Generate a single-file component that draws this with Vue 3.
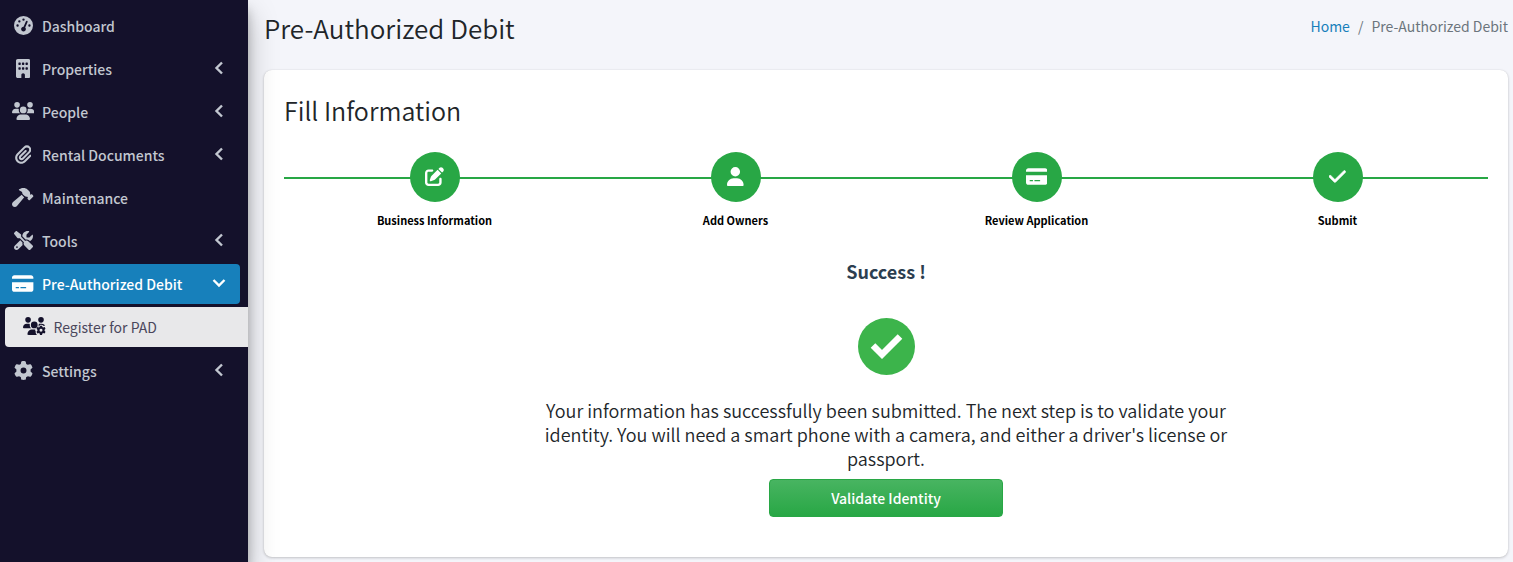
<script setup>
import { ref } from 'vue'

const icons = {
  gauge: { w: 512, d: 'M0 256a256 256 0 1 1 512 0A256 256 0 1 1 0 256zM288 96a32 32 0 1 0 -64 0 32 32 0 1 0 64 0zM256 416c35.3 0 64-28.7 64-64c0-17.4-6.9-33.1-18.1-44.6L366 161.7c5.3-12.1-.2-26.3-12.3-31.6s-26.3 .2-31.6 12.3L257.9 288c-.6 0-1.3 0-1.9 0c-35.3 0-64 28.7-64 64s28.7 64 64 64zM176 144a32 32 0 1 0 -64 0 32 32 0 1 0 64 0zM96 288a32 32 0 1 0 0-64 32 32 0 1 0 0 64zm352-32a32 32 0 1 0 -64 0 32 32 0 1 0 64 0z' },
  building: { w: 384, d: 'M48 0C21.5 0 0 21.5 0 48V464c0 26.5 21.5 48 48 48h96V432c0-26.5 21.5-48 48-48s48 21.5 48 48v80h96c26.5 0 48-21.5 48-48V48c0-26.5-21.5-48-48-48H48zM64 240c0-8.8 7.2-16 16-16h32c8.8 0 16 7.2 16 16v32c0 8.8-7.2 16-16 16H80c-8.8 0-16-7.2-16-16V240zm112-16h32c8.8 0 16 7.2 16 16v32c0 8.8-7.2 16-16 16H176c-8.8 0-16-7.2-16-16V240c0-8.8 7.2-16 16-16zm80 16c0-8.8 7.2-16 16-16h32c8.8 0 16 7.2 16 16v32c0 8.8-7.2 16-16 16H272c-8.8 0-16-7.2-16-16V240zM80 96h32c8.8 0 16 7.2 16 16v32c0 8.8-7.2 16-16 16H80c-8.8 0-16-7.2-16-16V112c0-8.8 7.2-16 16-16zm80 16c0-8.8 7.2-16 16-16h32c8.8 0 16 7.2 16 16v32c0 8.8-7.2 16-16 16H176c-8.8 0-16-7.2-16-16V112zM272 96h32c8.8 0 16 7.2 16 16v32c0 8.8-7.2 16-16 16H272c-8.8 0-16-7.2-16-16V112c0-8.8 7.2-16 16-16z' },
  users: { w: 640, d: 'M144 0a80 80 0 1 1 0 160A80 80 0 1 1 144 0zM512 0a80 80 0 1 1 0 160A80 80 0 1 1 512 0zM0 298.7C0 239.8 47.8 192 106.7 192h42.7c15.9 0 31 3.5 44.6 9.7c-1.3 7.2-1.9 14.7-1.9 22.3c0 38.2 16.8 72.5 43.3 96c-.2 0-.4 0-.7 0H21.3C9.6 320 0 310.4 0 298.7zM405.3 320c-.2 0-.4 0-.7 0c26.6-23.5 43.3-57.8 43.3-96c0-7.6-.7-15-1.9-22.3c13.6-6.3 28.7-9.7 44.6-9.7h42.7C592.2 192 640 239.8 640 298.7c0 11.8-9.6 21.3-21.3 21.3H405.3zM224 224a96 96 0 1 1 192 0 96 96 0 1 1 -192 0zM128 485.3C128 411.7 187.7 352 261.3 352H378.7C452.3 352 512 411.7 512 485.3c0 14.7-11.9 26.7-26.7 26.7H154.7c-14.7 0-26.7-11.9-26.7-26.7z' },
  clip: { w: 448, d: 'M364.2 83.8c-24.4-24.4-64-24.4-88.4 0l-184 184c-42.1 42.1-42.1 110.3 0 152.4s110.3 42.1 152.4 0l152-152c10.9-10.9 28.7-10.9 39.6 0s10.9 28.7 0 39.6l-152 152c-64 64-167.6 64-231.6 0s-64-167.6 0-231.6l184-184c46.3-46.3 121.3-46.3 167.6 0s46.3 121.3 0 167.6l-176 176c-28.6 28.6-75 28.6-103.6 0s-28.6-75 0-103.6l144-144c10.9-10.9 28.7-10.9 39.6 0s10.9 28.7 0 39.6l-144 144c-6.7 6.7-6.7 17.7 0 24.4s17.7 6.7 24.4 0l176-176c24.4-24.4 24.4-64 0-88.4z' },
  hammer: { w: 576, d: 'M413.5 237.5c-28.2 4.8-58.2-3.6-80-25.4l-38.1-38.1C280.4 159 272 138.8 272 117.6V105.5L192.3 62c-5.3-2.9-8.6-8.6-8.3-14.7s3.9-11.5 9.5-14l47.2-21C259.1 4.2 279 0 299.2 0h18.1c36.7 0 72 14 98.7 39.1l44.6 42c24.2 22.8 33.2 55.7 26.6 86L503 183l8-8c9.4-9.4 24.6-9.4 33.9 0l24 24c9.4 9.4 9.4 24.6 0 33.9l-88 88c-9.4 9.4-24.6 9.4-33.9 0l-24-24c-9.4-9.4-9.4-24.6 0-33.9l8-8-17.5-17.5zM27.4 377.1L260.9 182.6c3.5 4.9 7.5 9.6 11.8 14l38.1 38.1c6 6 12.4 11.2 19.2 15.7L134.9 484.6c-14.5 17.4-36 27.4-58.6 27.4C34.1 512 0 477.8 0 435.7c0-22.6 10.1-44.1 27.4-58.6z' },
  tools: { w: 512, d: 'M78.6 5C69.1-2.4 55.6-1.5 47 7L7 47c-8.5 8.5-9.4 22-2.1 31.6l80 104c4.5 5.9 11.6 9.4 19 9.4h54.1l109 109c-14.7 29-10 65.4 14.3 89.6l112 112c12.5 12.5 32.8 12.5 45.3 0l64-64c12.5-12.5 12.5-32.8 0-45.3l-112-112c-24.2-24.2-60.6-29-89.6-14.3l-109-109V104c0-7.5-3.5-14.5-9.4-19L78.6 5zM19.9 396.1C7.2 408.8 0 426.1 0 444.1C0 481.6 30.4 512 67.9 512c18 0 35.3-7.2 48-19.9L233.7 374.3c-7.8-20.9-9-43.6-3.6-65.1l-61.7-61.7L19.9 396.1zM512 144c0-10.5-1.1-20.7-3.2-30.5c-2.4-11.2-16.1-14.1-24.2-6l-63.9 63.9c-3 3-7.1 4.7-11.3 4.7H352c-8.8 0-16-7.2-16-16V102.6c0-4.2 1.7-8.3 4.7-11.3l63.9-63.9c8.1-8.1 5.2-21.8-6-24.2C388.7 1.1 378.5 0 368 0C288.5 0 224 64.5 224 144l0 .8 85.3 85.3c36-9.1 75.8 .5 104 28.7L429 274.5c49-23 83-72.8 83-130.5zM56 432a24 24 0 1 1 48 0 24 24 0 1 1 -48 0z' },
  credit: { w: 576, d: 'M64 32C28.7 32 0 60.7 0 96v32H576V96c0-35.3-28.7-64-64-64H64zM576 224H0V416c0 35.3 28.7 64 64 64H512c35.3 0 64-28.7 64-64V224zM112 352h64c8.8 0 16 7.2 16 16s-7.2 16-16 16H112c-8.8 0-16-7.2-16-16s7.2-16 16-16zm112 16c0-8.8 7.2-16 16-16H368c8.8 0 16 7.2 16 16s-7.2 16-16 16H240c-8.8 0-16-7.2-16-16z' },
  gear: { w: 512, d: 'M495.9 166.6c3.2 8.7 .5 18.4-6.4 24.6l-43.3 39.4c1.1 8.3 1.7 16.8 1.7 25.4s-.6 17.1-1.7 25.4l43.3 39.4c6.9 6.2 9.6 15.9 6.4 24.6c-4.4 11.9-9.7 23.3-15.8 34.3l-4.7 8.1c-6.6 11-14 21.4-22.1 31.2c-5.9 7.2-15.7 9.6-24.5 6.8l-55.7-17.7c-13.4 10.3-28.2 18.9-44 25.4l-12.5 57.1c-2 9.1-9 16.3-18.2 17.8c-13.8 2.3-28 3.5-42.5 3.5s-28.7-1.2-42.5-3.5c-9.2-1.5-16.2-8.7-18.2-17.8l-12.5-57.1c-15.8-6.5-30.6-15.1-44-25.4L83.1 425.9c-8.8 2.8-18.6 .3-24.5-6.8c-8.1-9.8-15.5-20.2-22.1-31.2l-4.7-8.1c-6.1-11-11.4-22.4-15.8-34.3c-3.2-8.7-.5-18.4 6.4-24.6l43.3-39.4C64.6 273.1 64 264.6 64 256s.6-17.1 1.7-25.4L22.4 191.2c-6.9-6.2-9.6-15.9-6.4-24.6c4.4-11.9 9.7-23.3 15.8-34.3l4.7-8.1c6.6-11 14-21.4 22.1-31.2c5.9-7.2 15.7-9.6 24.5-6.8l55.7 17.7c13.4-10.3 28.2-18.9 44-25.4l12.5-57.1c2-9.1 9-16.3 18.2-17.8C227.3 1.2 241.5 0 256 0s28.7 1.2 42.5 3.5c9.2 1.5 16.2 8.7 18.2 17.8l12.5 57.1c15.8 6.5 30.6 15.1 44 25.4l55.7-17.7c8.8-2.8 18.6-.3 24.5 6.8c8.1 9.8 15.5 20.2 22.1 31.2l4.7 8.1c6.1 11 11.4 22.4 15.8 34.3zM256 336a80 80 0 1 0 0-160 80 80 0 1 0 0 160z' },
  edit: { w: 512, d: 'M471.6 21.7c-21.9-21.9-57.3-21.9-79.2 0L362.3 51.7l97.9 97.9 30.1-30.1c21.9-21.9 21.9-57.3 0-79.2L471.6 21.7zm-299.2 220c-6.1 6.1-10.8 13.6-13.5 21.9l-29.6 88.8c-2.9 8.6-.6 18.1 5.8 24.6s15.9 8.7 24.6 5.8l88.8-29.6c8.2-2.7 15.7-7.4 21.9-13.5L437.7 172.3 339.7 74.3 172.4 241.7zM96 64C43 64 0 107 0 160V416c0 53 43 96 96 96H352c53 0 96-43 96-96V320c0-17.7-14.3-32-32-32s-32 14.3-32 32v96c0 17.7-14.3 32-32 32H96c-17.7 0-32-14.3-32-32V160c0-17.7 14.3-32 32-32h96c17.7 0 32-14.3 32-32s-14.3-32-32-32H96z' },
  user: { w: 448, d: 'M224 256A128 128 0 1 0 224 0a128 128 0 1 0 0 256zm-45.7 48C79.8 304 0 383.8 0 482.3C0 498.7 13.3 512 29.7 512H418.3c16.4 0 29.7-13.3 29.7-29.7C448 383.8 368.2 304 269.7 304H178.3z' },
  check: { w: 448, d: 'M438.6 105.4c12.5 12.5 12.5 32.8 0 45.3l-256 256c-12.5 12.5-32.8 12.5-45.3 0l-128-128c-12.5-12.5-12.5-32.8 0-45.3s32.8-12.5 45.3 0L160 338.7 393.4 105.4c12.5-12.5 32.8-12.5 45.3 0z' }
}

const menu = ref([
  { label: 'Dashboard', icon: 'gauge' },
  { label: 'Properties', icon: 'building', expandable: true },
  { label: 'People', icon: 'users', expandable: true },
  { label: 'Rental Documents', icon: 'clip', expandable: true },
  { label: 'Maintenance', icon: 'hammer' },
  { label: 'Tools', icon: 'tools', expandable: true },
  { label: 'Pre-Authorized Debit', icon: 'credit', expandable: true, open: true, children: ['Register for PAD'] },
  { label: 'Settings', icon: 'gear', expandable: true }
])

const steps = [
  { label: 'Business Information', icon: 'edit' },
  { label: 'Add Owners', icon: 'user' },
  { label: 'Review Application', icon: 'credit' },
  { label: 'Submit', icon: 'check' }
]
</script>

<template>
  <div class="layout">
    <aside class="sidebar">
      <nav aria-label="Main">
        <ul class="menu">
          <li v-for="item in menu" :key="item.label">
            <a href="#" class="menu-link" :class="{ active: item.open }">
              <span class="menu-icon">
                <svg class="icon" :class="`icon-${item.icon}`" :viewBox="`0 0 ${icons[item.icon].w} 512`" aria-hidden="true">
                  <path :d="icons[item.icon].d" />
                </svg>
              </span>
              <span class="menu-label">{{ item.label }}</span>
              <svg v-if="item.expandable" class="arrow" :class="{ down: item.open }" viewBox="0 0 14 14" aria-hidden="true">
                <path d="M10 1.500L4.500 7L10 12.500" />
              </svg>
            </a>
            <ul v-if="item.children" class="submenu">
              <li v-for="child in item.children" :key="child">
                <a href="#" class="submenu-link">
                  <svg class="icon icon-users" viewBox="0 0 640 512" aria-hidden="true">
                    <circle cx="144" cy="80" r="80" />
                    <circle cx="512" cy="80" r="80" />
                    <path d="M0 298.700C0 239.800 47.800 192 106.700 192h42.700c15.900 0 31 3.500 44.600 9.700c-1.300 7.200-1.900 14.700-1.900 22.300c0 38.200 16.800 72.500 43.300 96H21.300C9.600 320 0 310.400 0 298.700z" />
                    <path d="M446 201.700c13.600-6.300 28.700-9.700 44.600-9.700h42.700c40 0 74 20 92 52l-30 14c-20-24-40-32-66-34c-34-2-56 12-70 42l-22 4c6-14 12-42 8.700-68.300z" />
                    <circle cx="320" cy="224" r="96" />
                    <path d="M261.300 352H350c-6 26 0 44 14 60c-8 26-2 56 16 76c6 10 14 18 24 24H154.700c-14.700 0-26.700-11.900-26.700-26.700C128 411.700 187.700 352 261.300 352z" />
                    <svg x="376" y="240" width="272" height="272" viewBox="0 0 512 512">
                      <path :d="icons.gear.d" />
                    </svg>
                  </svg>
                  <span>{{ child }}</span>
                </a>
              </li>
            </ul>
          </li>
        </ul>
      </nav>
    </aside>

    <main class="content">
      <header class="page-header">
        <h1>Pre-Authorized Debit</h1>
        <ol class="breadcrumb">
          <li><a href="#">Home</a></li>
          <li aria-hidden="true">/</li>
          <li>Pre-Authorized Debit</li>
        </ol>
      </header>

      <section class="panel">
        <h2>Fill Information</h2>
        <ol class="steps">
          <li v-for="step in steps" :key="step.label" class="step">
            <span class="step-dot">
              <svg class="icon" :class="`step-${step.icon}`" :viewBox="`0 0 ${icons[step.icon].w} 512`" aria-hidden="true">
                <path :d="icons[step.icon].d" />
              </svg>
            </span>
            <span>{{ step.label }}</span>
          </li>
        </ol>

        <div class="result">
          <h3>Success !</h3>
          <svg class="success" viewBox="0 0 57 57" aria-hidden="true">
            <circle cx="28.500" cy="28.500" r="28.500" fill="#3cb44b" />
            <path d="M15 27.500L24 36.500L42 18.500" fill="none" stroke="#fff" stroke-width="6.500" />
          </svg>
          <p>Your information has successfully been submitted. The next step is to validate your identity. You will need a smart phone with a camera, and either a driver's license or passport.</p>
          <button type="button" class="validate">Validate Identity</button>
        </div>
      </section>
    </main>
  </div>
</template>

<style>
body {
  margin: 0;
  background: #f4f5fa;
}
</style>

<style scoped>
.layout {
  display: flex;
  min-height: 100vh;
  overflow: hidden;
  background: #f4f5fa;
  color: #212529;
  font-family: "Noto Sans CJK SC", "Noto Sans", sans-serif;
  font-size: 14px;
  line-height: 24px;
}
ul, ol {
  margin: 0;
  padding: 0;
  list-style: none;
}
h1, h2, h3, p {
  margin: 0;
}
a {
  text-decoration: none;
}
.icon {
  display: block;
  height: 19px;
  fill: currentColor;
}
.icon-users {
  height: 18px;
}
.sidebar {
  position: relative;
  z-index: 1;
  flex: 0 0 248px;
  background: #14112b;
  box-shadow: 0 14px 28px rgba(0, 0, 0, 0.25), 0 10px 10px rgba(0, 0, 0, 0.22);
}
.menu {
  display: grid;
  gap: 3px;
  padding-top: 6px;
}
.menu-link {
  display: flex;
  align-items: center;
  box-sizing: border-box;
  height: 40px;
  margin-right: 8px;
  padding: 0 14px 0 10px;
  border-radius: 0 4px 4px 0;
  color: #c2c7d0;
  font-weight: 500;
}
.menu-link.active {
  background: #1780bb;
  color: #fff;
}
.menu-icon {
  display: flex;
  justify-content: center;
  width: 26px;
  margin-right: 6px;
  padding-bottom: 2px;
}
.menu-label {
  flex: 1;
}
.arrow {
  width: 14px;
  height: 14px;
  margin-bottom: 2px;
  fill: none;
  stroke: currentColor;
  stroke-width: 2.4;
}
.arrow.down {
  transform: rotate(-90deg);
}
.submenu {
  margin: 3px 0 1px;
}
.submenu-link {
  display: flex;
  align-items: center;
  gap: 8px;
  height: 40px;
  margin-left: 5px;
  padding-left: 18px;
  border-radius: 4px 0 0 4px;
  background: #e8e8ea;
  color: #14112b;
}
.submenu-link .icon {
  padding-bottom: 2px;
}
.submenu-link span {
  color: #4a475c;
}
.content {
  flex: 1;
  min-width: 0;
  padding: 10px 5px 5px 16px;
}
.page-header {
  display: flex;
  align-items: flex-start;
  justify-content: space-between;
  margin-bottom: 24px;
}
h1 {
  font-size: 26px;
  font-weight: 350;
  line-height: 36px;
}
.breadcrumb {
  display: flex;
  gap: 8px;
  padding-top: 4px;
  color: #6c757d;
}
.breadcrumb a {
  color: #1780bb;
}
.panel {
  padding: 22px 20px 40px;
  border-radius: 8px;
  background: #fff;
  box-shadow: 0 0 1px rgba(0, 0, 0, 0.13), 0 1px 3px rgba(0, 0, 0, 0.2);
}
h2 {
  margin-bottom: 24px;
  font-size: 25px;
  font-weight: 350;
  line-height: 36px;
}
.steps {
  position: relative;
  display: flex;
}
.steps::before {
  content: "";
  position: absolute;
  top: 25px;
  right: 0;
  left: 0;
  height: 2px;
  background: #28a745;
}
.step {
  position: relative;
  display: flex;
  flex: 1;
  flex-direction: column;
  align-items: center;
  gap: 9px;
  color: #000;
  font-size: 11px;
  font-weight: 700;
  line-height: 18px;
}
.step-dot {
  display: flex;
  align-items: center;
  justify-content: center;
  box-sizing: border-box;
  width: 50px;
  height: 50px;
  padding-bottom: 2px;
  border-radius: 50%;
  background: #28a745;
  color: #fff;
}
.step-check {
  stroke: currentColor;
  stroke-width: 16;
}
.result {
  display: flex;
  flex-direction: column;
  align-items: center;
  max-width: 700px;
  margin: 30px auto 0;
  text-align: center;
}
h3 {
  color: #2c3e50;
  font-size: 18px;
  font-weight: 700;
  line-height: 24px;
}
.success {
  width: 57px;
  height: 57px;
  margin: 35px 0 23px;
}
p {
  font-size: 18px;
  font-weight: 350;
  line-height: 24px;
}
.validate {
  width: 33.333%;
  height: 38px;
  margin-top: 9px;
  border: 1px solid #28a745;
  border-radius: 4px;
  background: linear-gradient(#48b461, #28a745);
  color: #fff;
  font-family: inherit;
  font-size: 14px;
  font-weight: 500;
}
</style>
